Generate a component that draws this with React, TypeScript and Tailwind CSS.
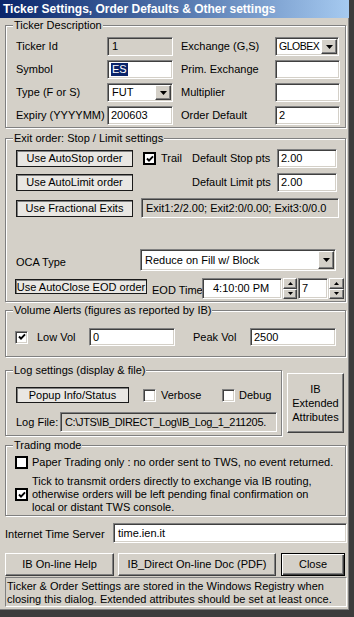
import React from 'react';

const sunken =
  'border border-t-[#808080] border-l-[#808080] border-r-white border-b-white shadow-[inset_1px_1px_0_#404040,inset_-1px_-1px_0_#d4d0c8]';
const raised =
  'border border-t-white border-l-white border-r-[#404040] border-b-[#404040] shadow-[inset_-1px_-1px_0_#808080,inset_1px_1px_0_#d4d0c8]';
const pushed = 'border border-[#1a1a1a] shadow-[inset_1px_1px_0_#808080] bg-[#e9e7e3]';

type FieldProps = { className: string; text?: string; disabled?: boolean; selected?: boolean };

const Field = ({ className, text = '', disabled, selected }: FieldProps) => (
  <div
    className={`${sunken} ${className} ${disabled ? 'bg-[#d4d0c8]' : 'bg-white'} flex items-center pl-[3px] overflow-hidden whitespace-nowrap shrink-0`}
  >
    {selected ? <span className="bg-[#0a246a] text-white px-[1px]">{text}</span> : text}
  </div>
);

const Arrow = () => (
  <svg width="7" height="4" viewBox="0 0 7 4">
    <polygon points="0,0 7,0 3.5,4" fill="#000" />
  </svg>
);

const Combo = ({ className, value, tight }: { className: string; value: string; tight?: boolean }) => (
  <div className={`${sunken} ${className} bg-white flex items-stretch p-[1px] shrink-0`}>
    <div
      className={`flex-1 min-w-0 flex items-center whitespace-nowrap overflow-hidden ${
        tight ? 'pl-[2px] text-[10.5px] tracking-[-0.5px]' : 'pl-[3px]'
      }`}
    >
      {value}
    </div>
    <div className={`${raised} w-[16px] shrink-0 bg-[#d4d0c8] flex items-center justify-center`}>
      <Arrow />
    </div>
  </div>
);

const Spin = ({ className }: { className: string }) => (
  <div className={`${className} flex flex-col shrink-0`}>
    <div className={`${raised} flex-1 bg-[#d4d0c8] flex items-center justify-center`}>
      <svg width="5" height="3" viewBox="0 0 5 3">
        <polygon points="2.5,0 5,3 0,3" fill="#000" />
      </svg>
    </div>
    <div className={`${raised} flex-1 bg-[#d4d0c8] flex items-center justify-center`}>
      <svg width="5" height="3" viewBox="0 0 5 3">
        <polygon points="0,0 5,0 2.5,3" fill="#000" />
      </svg>
    </div>
  </div>
);

const Check = ({ checked, bold }: { checked?: boolean; bold?: boolean }) => (
  <div
    className={`w-[13px] h-[13px] shrink-0 bg-white flex items-center justify-center ${
      bold ? 'border-2 border-black' : sunken
    }`}
  >
    {checked && (
      <svg width="8" height="8" viewBox="0 0 8 8">
        <polyline points="1,3.5 3,5.6 7,1.4" fill="none" stroke="#000" strokeWidth="1.9" />
      </svg>
    )}
  </div>
);

const Group = ({ label, className, children }: { label: string; className: string; children: React.ReactNode }) => (
  <div className={`relative border border-[#808080] shadow-[inset_1px_1px_0_#fff,1px_1px_0_#fff] ${className}`}>
    <span className="absolute -top-[7px] left-[7px] bg-[#d4d0c8] px-[1px] leading-[13px] whitespace-nowrap">
      {label}
    </span>
    {children}
  </div>
);

const App = () => {
  return (
    <div className="w-[354px] h-[617px] bg-[#d4d0c8] border-r-[5px] border-b-[7px] border-[#3c3c3c] font-['Liberation_Sans',Arial,sans-serif] text-[11px] leading-[13px] text-black overflow-hidden">
      <div className="h-full shadow-[inset_-1px_-1px_0_#808080] flex flex-col">
        {/* title bar */}
        <div className="h-[18px] bg-gradient-to-r from-[#0a246a] to-[#a6caf0] flex items-center pl-[3px] text-white font-bold text-[12px] whitespace-nowrap shrink-0">
          Ticker Settings, Order Defaults &amp; Other settings
        </div>

        <div className="pl-[5px] flex flex-col">
          {/* ticker description */}
          <Group label="Ticker Description" className="mt-[7px] w-[341px] h-[103px] pt-[11px] pl-[10px] flex flex-col gap-[4px]">
            <div className="flex items-center h-[19px]">
              <span className="w-[91px]">Ticker Id</span>
              <Field className="w-[66px] h-[19px] pl-[4px]" text="1" disabled />
              <span className="ml-[8px] w-[94px]">Exchange (G,S)</span>
              <Combo className="w-[64px] h-[19px]" value="GLOBEX" tight />
            </div>
            <div className="flex items-center h-[19px]">
              <span className="w-[91px]">Symbol</span>
              <Field className="w-[66px] h-[19px]" text="ES" selected />
              <span className="ml-[8px] w-[94px]">Prim. Exchange</span>
              <Field className="w-[65px] h-[19px]" />
            </div>
            <div className="flex items-center h-[19px]">
              <span className="w-[91px]">Type (F or S)</span>
              <Combo className="w-[66px] h-[19px]" value="FUT" />
              <span className="ml-[8px] w-[94px]">Multiplier</span>
              <Field className="w-[65px] h-[19px]" />
            </div>
            <div className="flex items-center h-[19px]">
              <span className="w-[91px]">Expiry (YYYYMM)</span>
              <Field className="w-[66px] h-[19px]" text="200603" />
              <span className="ml-[8px] w-[94px]">Order Default</span>
              <Field className="w-[65px] h-[19px]" text="2" />
            </div>
          </Group>

          {/* exit order */}
          <Group label="Exit order: Stop / Limit settings" className="mt-[10px] w-[341px] h-[164px] pt-[10px] pl-[10px] flex flex-col">
            <div className="flex items-center h-[19px]">
              <button className={`${pushed} w-[117px] h-[17px] leading-[13px]`}>Use AutoStop order</button>
              <div className="ml-[10px]">
                <Check checked bold />
              </div>
              <span className="ml-[5px] w-[31px]">Trail</span>
              <span className="w-[85px] whitespace-nowrap">Default Stop pts</span>
              <Field className="w-[60px] h-[19px]" text="2.00" />
            </div>
            <div className="flex items-center h-[19px] mt-[5px]">
              <button className={`${pushed} w-[117px] h-[17px] leading-[13px]`}>Use AutoLimit order</button>
              <span className="ml-[59px] w-[85px] whitespace-nowrap">Default Limit pts</span>
              <Field className="w-[60px] h-[19px]" text="2.00" />
            </div>
            <div className="flex items-center h-[20px] mt-[6px]">
              <button className={`${pushed} w-[117px] h-[17px] leading-[13px]`}>Use Fractional Exits</button>
              <Field className="ml-[8px] w-[198px] h-[20px] pl-[4px]" text="Exit1:2/2.00; Exit2:0/0.00; Exit3:0/0.0" disabled />
            </div>
            <div className="flex items-center h-[22px] mt-[31px]">
              <span className="w-[124px] pt-[4px]">OCA Type</span>
              <Combo className="w-[196px] h-[22px]" value="Reduce on Fill w/ Block" />
            </div>
            <div className="flex items-center h-[21px] mt-[7px] -ml-[1px]">
              <button className={`${pushed} w-[132px] h-[15px] leading-[12px] whitespace-nowrap self-start mt-[1px]`}>
                Use AutoClose EOD order
              </button>
              <span className="ml-[5px] w-[50px] pt-[3px] whitespace-nowrap">EOD Time</span>
              <Field className="w-[80px] h-[21px] pl-[10px]" text="4:10:00 PM" />
              <Spin className="ml-[1px] w-[14px] h-[21px]" />
              <Field className="ml-[1px] w-[30px] h-[21px] pl-[3px]" text="7" />
              <Spin className="ml-[1px] w-[15px] h-[21px]" />
            </div>
          </Group>

          {/* volume alerts */}
          <Group label="Volume Alerts (figures as reported by IB)" className="mt-[8px] w-[341px] h-[47px] pt-[17px] pl-[9px]">
            <div className="flex items-center h-[18px]">
              <Check checked />
              <span className="ml-[9px] w-[52px]">Low Vol</span>
              <Field className="w-[86px] h-[18px]" text="0" />
              <span className="ml-[18px] w-[57px]">Peak Vol</span>
              <Field className="w-[86px] h-[18px]" text="2500" />
            </div>
          </Group>

          {/* log settings + extended button */}
          <div className="flex items-start mt-[13px]">
            <Group label="Log settings (display & file)" className="w-[277px] h-[66px] pt-[16px] pl-[10px] flex flex-col">
              <div className="flex items-center h-[16px]">
                <button className={`${pushed} w-[113px] h-[16px] leading-[13px]`}>Popup Info/Status</button>
                <div className="ml-[14px] w-[79px] flex items-center">
                  <Check />
                  <span className="ml-[5px]">Verbose</span>
                </div>
                <Check />
                <span className="ml-[4px]">Debug</span>
              </div>
              <div className="flex items-center h-[20px] mt-[9px]">
                <span className="w-[44px]">Log File:</span>
                <Field
                  className="w-[217px] h-[20px] pl-[4px] tracking-[-0.35px]"
                  text="C:\JTS\IB_DIRECT_Log\IB_Log_1_211205."
                  disabled
                />
              </div>
            </Group>
            <button
              className={`${raised} ml-[5px] mt-[3px] w-[57px] h-[60px] bg-[#d4d0c8] flex flex-col items-center justify-center leading-[14px]`}
            >
              <span>IB</span>
              <span>Extended</span>
              <span>Attributes</span>
            </button>
          </div>

          {/* trading mode */}
          <Group label="Trading mode" className="mt-[9px] w-[341px] h-[71px] pt-[9px] pl-[9px] flex flex-col">
            <div className="flex items-center h-[14px]">
              <Check bold />
              <span className="ml-[4px] whitespace-nowrap">Paper Trading only : no order sent to TWS, no event returned.</span>
            </div>
            <div className="flex items-center mt-[6px]">
              <Check checked bold />
              <span className="ml-[4px] leading-[13px]">
                Tick to transmit orders directly to exchange via IB routing,
                <br />
                otherwise orders will be left pending final confirmation on
                <br />
                local or distant TWS console.
              </span>
            </div>
          </Group>

          {/* time server */}
          <div className="flex items-center h-[20px] mt-[7px]">
            <span className="w-[108px] pt-[2px]">Internet Time Server</span>
            <Field className="w-[234px] h-[20px] pl-[4px]" text="time.ien.it" />
          </div>

          {/* buttons */}
          <div className="flex h-[23px] mt-[10px]">
            <button className={`${raised} w-[109px] bg-[#d4d0c8]`}>IB On-line Help</button>
            <button className={`${raised} ml-[4px] w-[158px] bg-[#d4d0c8]`}>IB_Direct On-line Doc (PDF)</button>
            <button className="ml-[5px] w-[64px] bg-[#d4d0c8] border border-black shadow-[inset_1px_1px_0_#fff,inset_-1px_-1px_0_#404040,inset_-2px_-2px_0_#808080]">
              Close
            </button>
          </div>

          {/* status */}
          <div className="mt-[1px] w-[342px] h-[30px] border border-t-[#808080] border-l-[#808080] border-r-white border-b-white pl-[1px] pt-[2px] leading-[13px]">
            Ticker &amp; Order Settings are stored in the Windows Registry when
            <br />
            closing this dialog. Extended attributes should be set at least once.
          </div>
        </div>
      </div>
    </div>
  );
};

export default App;
